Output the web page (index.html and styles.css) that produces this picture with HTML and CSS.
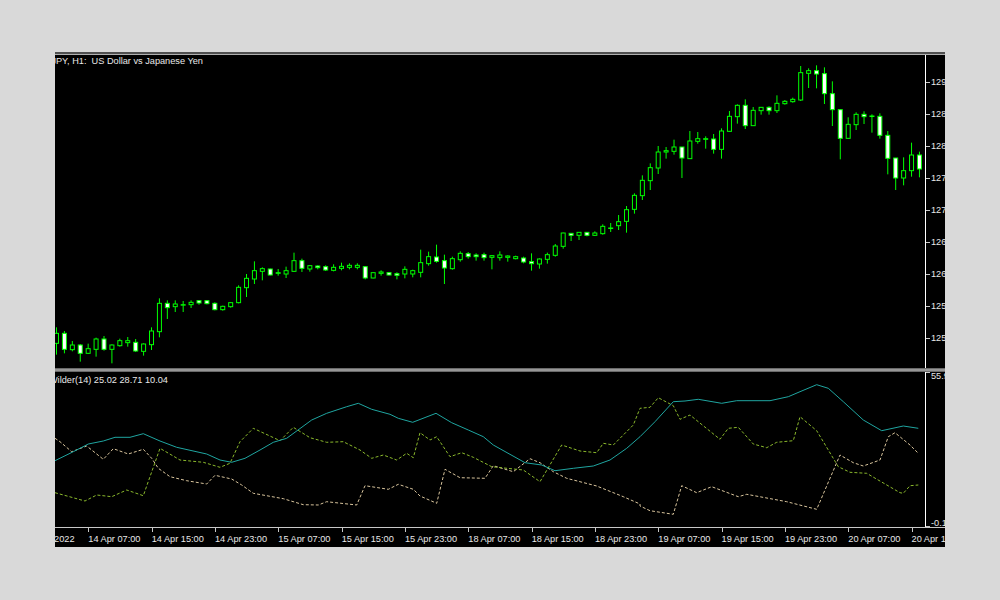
FILE: index.html
```html
<!DOCTYPE html>
<html lang="en">
<head>
    <meta charset="UTF-8">
    <title>USDJPY, H1</title>
    <link rel="stylesheet" href="styles.css">
</head>
<body>
<div class="chart">
    <div class="pane main-pane">
        <div class="plot">
            <svg id="candles" viewBox="55 55 870 313"></svg>
            <div class="legend main-legend">USDJPY, H1:&nbsp; US Dollar vs Japanese Yen</div>
        </div>
        <div class="price-axis">
            <div class="price">129.20</div>
            <div class="price">128.75</div>
            <div class="price">128.30</div>
            <div class="price">127.85</div>
            <div class="price">127.40</div>
            <div class="price">126.95</div>
            <div class="price">126.50</div>
            <div class="price">125.95</div>
            <div class="price">125.50</div>
        </div>
    </div>
    <div class="separator"></div>
    <div class="pane sub-pane">
        <div class="plot">
            <svg id="adx" viewBox="55 372 870 155"></svg>
            <div class="legend sub-legend">ADX Wilder(14) 25.02 28.71 10.04</div>
        </div>
        <div class="price-axis sub-axis">
            <div class="price">55.90</div>
            <div class="price">-0.10</div>
        </div>
    </div>
    <div class="time-axis">
        <div class="time">14 Apr 2022</div>
        <div class="time">14 Apr 07:00</div>
        <div class="time">14 Apr 15:00</div>
        <div class="time">14 Apr 23:00</div>
        <div class="time">15 Apr 07:00</div>
        <div class="time">15 Apr 15:00</div>
        <div class="time">15 Apr 23:00</div>
        <div class="time">18 Apr 07:00</div>
        <div class="time">18 Apr 15:00</div>
        <div class="time">18 Apr 23:00</div>
        <div class="time">19 Apr 07:00</div>
        <div class="time">19 Apr 15:00</div>
        <div class="time">19 Apr 23:00</div>
        <div class="time">20 Apr 07:00</div>
        <div class="time">20 Apr 15:00</div>
    </div>
</div>
<script src="chart.js"></script>
</body>
</html>
```

FILE: styles.css
```css
body {
    margin: 0;
    height: 100vh;
    background-color: #d9d9d9;
    font-family: "Liberation Sans", Arial, sans-serif;
    font-size: 9.2px;
    color: #e8e8e8;
    overflow: hidden;
}
.chart {
    width: 890px;
    height: 495px;
    margin: 52px 0 0 55px;
    background: #000000;
    border-top: 2px solid #505050;
    box-sizing: border-box;
    display: flex;
    flex-direction: column;
    overflow: hidden;
}
.pane {
    display: flex;
}
.main-pane {
    height: 314px;
    border-top: 1px solid #b0b0b0;
    box-sizing: border-box;
}
.sub-pane {
    height: 155px;
    border-bottom: 1px solid #c8c8c8;
}
.plot {
    position: relative;
    width: 870px;
    overflow: hidden;
}
.plot svg {
    display: block;
    width: 870px;
    height: 100%;
}
.legend {
    position: absolute;
    top: 0;
    white-space: nowrap;
    line-height: 12px;
}
.main-legend {
    left: -23px;
}
.sub-legend {
    left: -27.5px;
    top: 2px;
}
.separator {
    height: 4px;
    background: #969696;
    border-top: 1px solid #6a6a6a;
    border-bottom: 1px solid #6a6a6a;
    box-sizing: border-box;
}
.price-axis {
    width: 20px;
    border-left: 1px solid #ffffff;
    padding-top: 11px;
    box-sizing: border-box;
    overflow: hidden;
}
.price {
    height: 32px;
    display: flex;
    align-items: center;
    white-space: nowrap;
}
.price::before {
    content: "";
    width: 4px;
    height: 1px;
    margin-right: 1px;
    flex: none;
    background: #c8c8c8;
}
.sub-axis {
    padding-top: 0;
    display: flex;
    flex-direction: column;
    justify-content: space-between;
}
.sub-axis .price {
    height: 8px;
    line-height: 8px;
}
.sub-axis .price:first-child::before {
    align-self: flex-start;
}
.sub-axis .price:last-child::before {
    align-self: flex-end;
}
.time-axis {
    display: flex;
    margin-left: -30px;
}
.time {
    flex: none;
    width: 63.33px;
    white-space: nowrap;
    line-height: 12px;
}
.time::before {
    content: "";
    display: block;
    width: 1px;
    height: 4px;
    margin-bottom: 1px;
    background: #c8c8c8;
}
```

FILE: chart.js
```js
// y values below are in 1/3 px, read off 3x crops, relative to each block's origin
const candleBlocks = [
    { top: 240, rows: [
        [262, 280, 310, 344, 0], [273, 280, 328, 340, 1], [303, 315, 329, 334, 0], [312, 315, 340, 365, 1],
        [311, 326, 340, 342, 0], [293, 297, 328, 350, 0], [288, 297, 328, 332, 1], [313, 315, 328, 370, 0],
        [296, 302, 317, 320, 0], [291, 302, 308, 320, 0], [297, 307, 333, 336, 1], [310, 312, 334, 347, 0],
        [262, 273, 314, 330, 0], [175, 190, 275, 292, 0], [181, 190, 203, 237, 1], [181, 192, 200, 216, 0],
        [183, 194, 195, 216, 0], [181, 187, 194, 204, 0], [180, 182, 189, 194, 1], [180, 182, 191, 193, 1],
        [187, 190, 209, 211, 1], [197, 199, 209, 212, 0], [186, 188, 200, 203, 0], [136, 142, 188, 190, 0],
        [102, 115, 143, 171, 0], [64, 92, 117, 132, 0], [82, 86, 94, 121, 0], [86, 87, 105, 106, 1],
        [87, 98, 100, 107, 0], [80, 92, 102, 114, 0], [38, 62, 94, 95, 0], [56, 62, 85, 96, 1],
        [75, 77, 87, 95, 0], [76, 78, 83, 88, 1], [76, 80, 90, 93, 1]
    ] },
    { top: 200, rows: [
        [193, 202, 211, 214, 0], [188, 199, 205, 211, 0], [190, 196, 202, 208, 0], [190, 196, 202, 208, 0],
        [198, 200, 234, 238, 1], [217, 218, 234, 235, 0], [211, 216, 220, 227, 0], [216, 218, 225, 226, 1],
        [217, 221, 226, 238, 1], [199, 208, 222, 235, 0], [209, 212, 222, 232, 0], [149, 188, 217, 232, 0],
        [155, 170, 191, 197, 0], [134, 171, 184, 188, 1], [164, 182, 204, 252, 1], [170, 176, 206, 209, 0],
        [154, 160, 179, 185, 0], [156, 161, 170, 176, 1], [160, 165, 170, 182, 1], [158, 164, 173, 182, 1],
        [165, 167, 172, 208, 0], [154, 165, 173, 182, 0], [166, 168, 172, 185, 0], [167, 170, 176, 178, 0],
        [170, 174, 186, 190, 1], [160, 185, 191, 212, 1], [175, 177, 192, 206, 0], [158, 164, 178, 191, 0],
        [132, 138, 166, 170, 0], [98, 99, 139, 146, 0], [99, 100, 106, 123, 1], [96, 97, 106, 120, 0],
        [96, 97, 106, 109, 1], [94, 99, 106, 108, 0], [73, 79, 101, 104, 0], [69, 84, 85, 96, 0],
        [45, 65, 77, 90, 0]
    ] },
    { top: 50, rows: [
        [468, 479, 514, 548, 0], [430, 436, 478, 491, 0], [376, 391, 437, 450, 0], [340, 353, 392, 420, 0],
        [288, 306, 354, 372, 0], [291, 302, 306, 326, 0], [269, 291, 304, 314, 0], [291, 291, 324, 384, 1],
        [243, 273, 326, 327, 0], [246, 266, 274, 281, 0], [259, 266, 268, 296, 0], [252, 267, 298, 311, 1],
        [235, 243, 298, 326, 0], [183, 199, 244, 245, 0], [163, 166, 200, 221, 0], [148, 166, 227, 237, 1],
        [171, 181, 227, 227, 0], [171, 172, 182, 194, 0], [169, 172, 182, 194, 1], [136, 160, 182, 189, 0],
        [150, 154, 161, 164, 0], [143, 148, 155, 158, 0], [48, 68, 150, 153, 0], [55, 62, 70, 114, 0],
        [46, 62, 72, 115, 1], [52, 71, 131, 162, 1], [94, 131, 179, 228, 1], [178, 179, 265, 328, 1],
        [202, 223, 265, 266, 0], [187, 193, 224, 240, 0], [184, 193, 200, 222, 1], [193, 198, 199, 248, 0],
        [190, 199, 256, 266, 1], [243, 256, 325, 373, 1], [324, 324, 384, 420, 1], [322, 362, 384, 406, 0],
        [278, 315, 362, 380, 0], [305, 315, 357, 382, 1]
    ] }
];

const adxLine = [
    [40, 370, [45,272, 100,245, 145,222, 190,213, 225,202, 270,202, 310,191, 360,213, 410,232, 500,252, 540,270, 575,277, 615,265, 660,240, 700,217, 740,205, 815,150, 860,130, 920,110, 955,100]],
    [340, 370, [95,118, 150,133, 175,145, 218,157, 288,130, 335,158, 385,180, 430,200, 460,225, 555,278, 605,285, 645,302, 700,295, 760,288, 810,270, 860,235]],
    [640, 370, [0,200, 45,155, 100,95, 135,93, 175,88, 245,100, 290,92, 390,92, 445,80, 480,65, 530,44, 565,55, 610,95, 670,150, 725,182, 790,168, 835,175]]
];
const plusLine = [
    [40, 370, [45,368, 135,393, 170,375, 215,380, 260,360, 310,377, 360,235, 420,270, 490,277, 540,292, 570,280, 600,215, 640,175, 720,212, 760,172, 810,203, 860,217, 910,215, 960,240]],
    [340, 370, [95,265, 130,255, 170,270, 200,250, 220,263, 240,188, 270,210, 290,200, 330,260, 365,248, 400,262, 455,290, 550,300, 600,335, 665,225, 720,243, 770,248, 790,220, 820,225, 880,165]],
    [640, 370, [0,115, 30,112, 55,83, 100,107, 120,148, 150,135, 240,208, 265,175, 295,172, 340,222, 380,233, 410,217, 460,212, 480,140, 530,182, 595,290, 630,307, 680,310, 780,368, 790,370, 810,347, 835,345]]
];
const minusLine = [
    [40, 370, [45,205, 60,215, 95,245, 140,228, 190,268, 220,236, 265,252, 310,238, 335,265, 355,295, 390,320, 440,332, 500,342, 525,316, 575,327, 605,345, 640,370, 730,386, 790,404, 835,405, 860,395, 950,405]],
    [340, 370, [75,347, 145,358, 175,343, 220,358, 240,378, 290,400, 315,298, 360,323, 435,325, 460,287, 520,305, 570,266, 600,278, 640,305, 680,325, 770,348, 850,380, 900,402]],
    [640, 370, [0,408, 30,422, 100,433, 125,347, 170,368, 215,350, 295,380, 320,373, 440,395, 530,418, 600,255, 640,278, 670,288, 720,270, 745,200, 765,188, 810,225, 835,250]]
];

const SVG_NS = 'http://www.w3.org/2000/svg';
const BAR_STEP = 7.917;
const GREEN = '#00ff00';

function addShape(parent, tag, attrs) {
    const el = document.createElementNS(SVG_NS, tag);
    for (const key in attrs) {
        el.setAttribute(key, attrs[key]);
    }
    parent.appendChild(el);
}

function drawCandles() {
    const svg = document.getElementById('candles');
    let index = 0;
    candleBlocks.forEach(function(block) {
        block.rows.forEach(function(row) {
            const x = 56.5 + index * BAR_STEP;
            const y = row.slice(0, 4).map(v => block.top + v / 3);
            addShape(svg, 'line', { x1: x, x2: x, y1: y[0], y2: y[3], stroke: GREEN });
            addShape(svg, 'rect', {
                x: x - 2, y: y[1], width: 4, height: Math.max(y[2] - y[1], 0.5),
                fill: row[4] ? '#ffffff' : '#000000', stroke: GREEN
            });
            index++;
        });
    });
}

function toPoints(line) {
    const out = [];
    line.forEach(function(part) {
        for (let i = 0; i < part[2].length; i += 2) {
            out.push((part[0] + part[2][i] / 3).toFixed(1) + ',' + (part[1] + part[2][i + 1] / 3).toFixed(1));
        }
    });
    return out.join(' ');
}

function drawAdx() {
    const svg = document.getElementById('adx');
    addShape(svg, 'polyline', { points: toPoints(minusLine), fill: 'none', stroke: '#d8c49c', 'stroke-dasharray': '3 2' });
    addShape(svg, 'polyline', { points: toPoints(plusLine), fill: 'none', stroke: '#8ab82c', 'stroke-dasharray': '3 2' });
    addShape(svg, 'polyline', { points: toPoints(adxLine), fill: 'none', stroke: '#1fa5a0' });
}

drawCandles();
drawAdx();
```
